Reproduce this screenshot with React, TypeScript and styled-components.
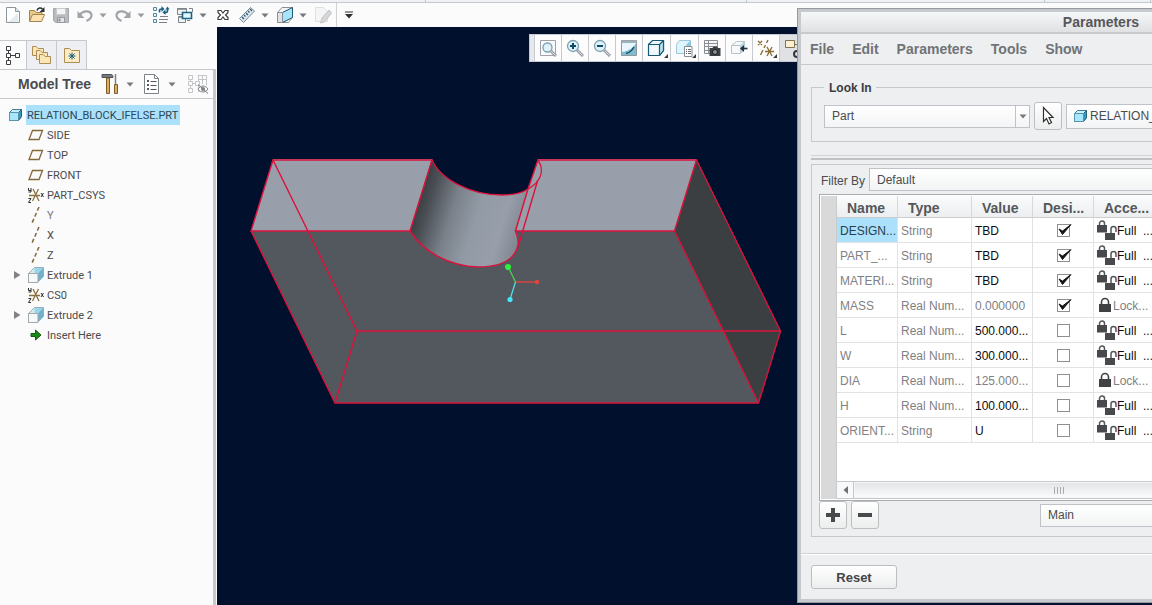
import React from "react";
import styled, { createGlobalStyle } from "styled-components";

const color = {
  panel: "#fbfbfc",
  line: "#c5c8cd",
  navy: "#00102d",
  dialog: "#edeff1",
  text: "#4a4b4d",
  muted: "#808184",
  select: "#abe1fb",
  edge: "#dc123c",
};

const GlobalStyle = createGlobalStyle`
  *, *::before, *::after { box-sizing: border-box; }
  html, body { margin: 0; height: 100%; overflow: hidden; }
  #root { height: 100%; }
  body, button, input, select {
    font-family: "Liberation Sans", Arial, sans-serif;
    font-size: 12px;
    color: ${color.text};
  }
  svg { display: block; flex: none; }
`;

/* ---------- frame ---------- */

const Page = styled.div`
  position: relative;
  display: flex;
  flex-direction: column;
  height: 100vh;
  overflow: hidden;
  background: ${color.panel};
`;

const RibbonEdge = styled.div`
  display: flex;
  height: 3px;
  background: #eef0f2;
  border-bottom: 1px solid ${color.line};
`;

const RibbonGroup = styled.div<{ $width: number }>`
  flex: none;
  width: ${(p) => p.$width}px;
  border-right: 1px solid ${color.line};
`;

const QuickBar = styled.div`
  display: flex;
  align-items: center;
  height: 24px;
  padding-left: 1px;
`;

const IconButton = styled.button<{ $faded?: boolean }>`
  display: flex;
  align-items: center;
  justify-content: center;
  width: 24px;
  height: 24px;
  padding: 0;
  border: 0;
  background: none;
  opacity: ${(p) => (p.$faded ? 0.5 : 1)};
`;

const CaretButton = styled(IconButton)<{ $wide?: boolean }>`
  width: ${(p) => (p.$wide ? 18 : 14)}px;
  padding-right: 2px;
`;

const BarDivider = styled.div`
  width: 1px;
  height: 24px;
  margin: 0 6px 0 1px;
  background: #d0d1d3;
`;

const Workspace = styled.div`
  display: flex;
  flex: 1;
  min-height: 0;
`;

/* ---------- model tree ---------- */

const Sidebar = styled.aside`
  display: flex;
  flex-direction: column;
  flex: none;
  width: 217px;
`;

const TabRow = styled.div`
  display: flex;
  flex: none;
  height: 42px;
  padding-top: 13px;
`;

const Tab = styled.button<{ $active?: boolean }>`
  display: flex;
  align-items: center;
  justify-content: center;
  width: ${(p) => (p.$active ? 27 : 30)}px;
  padding: 0;
  border: 1px solid ${color.line};
  border-left: 0;
  border-bottom: 0;
  background: ${(p) => (p.$active ? color.panel : "#eeeff2")};
`;

const TreePanel = styled.section`
  flex: 1;
  margin-right: 1px;
  border-top: 1px solid ${color.line};
  border-right: 3px solid #c6c8ce;
`;

const TreeHeader = styled.header`
  display: flex;
  align-items: center;
  height: 29px;
  padding-left: 18px;
  border-bottom: 1px solid ${color.line};
  & > :last-child { margin-left: 4px; }
`;

const TreeTitle = styled.h2`
  flex: none;
  width: 80px;
  margin: 0;
  font-size: 14px;
  line-height: 20px;
  white-space: nowrap;
`;

const TreeList = styled.ul`
  margin: 0;
  padding: 6px 0 0;
  list-style: none;
`;

const TreeRow = styled.li<{ $root?: boolean }>`
  display: flex;
  align-items: center;
  gap: 2px;
  height: 20px;
  padding-left: ${(p) => (p.$root ? 8 : 12)}px;
`;

const Expander = styled.span`
  display: flex;
  align-items: center;
  width: 14px;
  height: 20px;
`;

const TreeLabel = styled.span<{ $selected?: boolean; $light?: boolean }>`
  padding: 2px 2px 0 1px;
  font-family: Roboto, "Liberation Sans", sans-serif;
  font-size: 11px;
  line-height: 18px;
  color: ${(p) => (p.$selected ? "#2d4654" : p.$light ? "#77787a" : color.text)};
  background: ${(p) => (p.$selected ? color.select : "none")};
`;

/* ---------- viewport ---------- */

const Viewport = styled.main`
  position: relative;
  flex: 1;
  min-width: 0;
  overflow: hidden;
  background: ${color.navy};
`;

const ViewBar = styled.div`
  position: absolute;
  top: 7px;
  left: 312px;
  display: flex;
  height: 28px;
  padding-left: 4px;
  border: 1px solid #c6c9cf;
  border-right: 0;
  background: #e6e8ec;
`;

const ViewButton = styled.button<{ $menu?: boolean; $pressed?: boolean }>`
  position: relative;
  display: flex;
  align-items: center;
  justify-content: center;
  width: ${(p) => (p.$menu ? 28 : 27)}px;
  padding: 0 1px 0 0;
  border: 0;
  border-left: 1px solid #c6c9cf;
  background: ${(p) => (p.$pressed ? "#dfe1e5" : "#fcfcfd")};
`;

const MenuCorner = styled.span`
  position: absolute;
  right: 2px;
  bottom: 3px;
  border: 2px solid transparent;
  border-right-color: #3a3c40;
  border-bottom-color: #3a3c40;
`;

/* ---------- dialog ---------- */

const DialogFrame = styled.section`
  position: absolute;
  top: 8px;
  left: 797px;
  width: 608px;
  padding: 3px;
  border: 1px solid #96999d;
  background: #c6c9cd;
`;

const TitleBar = styled.h1`
  margin: 0;
  height: 22px;
  border-bottom: 2px solid #c8cbce;
  background: linear-gradient(#f6f7f8, #dfe1e3);
  font-size: 14px;
  line-height: 20px;
  text-align: center;
  color: #55575a;
`;

const MenuBar = styled.nav`
  display: flex;
  align-items: center;
  gap: 18px;
  height: 31px;
  padding-left: 9px;
  border-bottom: 1px solid ${color.line};
  background: ${color.dialog};
`;

const MenuItem = styled.button`
  padding: 0;
  border: 0;
  background: none;
  font-size: 14px;
  font-weight: bold;
  line-height: 20px;
  color: #717376;
`;

const DialogBody = styled.div`
  padding: 14px 10px 16px;
  background: ${color.dialog};
`;

const LookIn = styled.fieldset`
  margin: 0;
  padding: 7px 12px 11px;
  border: 1px solid ${color.line};
`;

const LookInTitle = styled.legend`
  padding: 2px 4px 0 5px;
  font-weight: bold;
  line-height: 14px;
  color: #3b3c3e;
`;

const LookInRow = styled.div`
  display: flex;
  align-items: center;
  gap: 4px;
`;

const SelectBox = styled.span<{ $width?: number }>`
  display: grid;
  grid-template-columns: 1fr 15px;
  flex: ${(p) => (p.$width ? "none" : "1")};
  width: ${(p) => (p.$width ? p.$width + "px" : "auto")};
  height: 23px;
`;

const SelectField = styled.select`
  grid-area: 1 / 1 / 2 / 3;
  appearance: none;
  height: 23px;
  padding: 0 0 0 7px;
  border: 1px solid #bfc2c6;
  border-radius: 0;
  background: linear-gradient(#ffffff, #f3f4f5);
`;

const SelectArrow = styled.span`
  grid-area: 1 / 2;
  display: flex;
  align-items: center;
  justify-content: center;
  border-left: 1px solid #bfc2c6;
  pointer-events: none;
`;

const ToolButton = styled.button`
  display: flex;
  align-items: center;
  justify-content: center;
  width: 28px;
  height: 28px;
  padding: 0;
  border: 1px solid #bcbfc2;
  border-radius: 3px;
  background: linear-gradient(#ffffff, #eceded);
`;

const PartField = styled.label`
  display: flex;
  flex: 1;
  align-items: center;
  height: 25px;
  padding-left: 6px;
  border: 1px solid #bfc2c6;
  background: linear-gradient(#ffffff, #f3f4f5);
`;

const PartInput = styled.input`
  flex: 1;
  min-width: 0;
  padding: 0 1px;
  border: 0;
  background: none;
`;

const SplitLine = styled.div`
  height: 5px;
  margin: 13px 0 4px;
  border-top: 1px solid #d2d4d7;
  border-bottom: 2px solid #bfc2c5;
`;

const GridGroup = styled.div`
  padding: 3px 7px 7px;
  border: 1px solid ${color.line};
`;

const FilterRow = styled.div`
  display: flex;
  align-items: center;
  padding-left: 2px;
`;

const FilterLabel = styled.label`
  width: 48px;
  padding-top: 2px;
  line-height: 20px;
`;

const GridBox = styled.div`
  display: flex;
  margin-top: 3px;
  padding: 1px;
  border: 1px solid #a9acaf;
  background: #fff;
`;

const Gutter = styled.div`
  flex: none;
  width: 16px;
  border-right: 1px solid #c9cbcd;
  background: #d9d9da;
`;

const GridBody = styled.div`
  flex: 1;
  min-width: 0;
  overflow: hidden;
`;

const Table = styled.table`
  width: 100%;
  table-layout: fixed;
  border-collapse: separate;
  border-spacing: 0;
`;

const Head = styled.th`
  height: 22px;
  padding: 3px 0 0 10px;
  border-right: 1px solid #d6d8da;
  border-bottom: 1px solid #cbcdd0;
  background: linear-gradient(#fafbfb, #eceef0);
  font-size: 14px;
  line-height: 18px;
  text-align: left;
  white-space: nowrap;
  overflow: hidden;
  color: #55575a;
`;

const Cell = styled.td<{ $strong?: boolean; $selected?: boolean }>`
  height: 25px;
  padding: 2px 0 0 3px;
  border-right: 1px solid #e0e2e4;
  border-bottom: 1px solid #e0e2e4;
  line-height: 20px;
  white-space: pre;
  overflow: hidden;
  color: ${(p) => (p.$selected ? "#26404e" : p.$strong ? "#0d0d0e" : color.muted)};
  background: ${(p) => (p.$selected ? color.select : "#fff")};
`;

const AccessValue = styled.div`
  display: flex;
  align-items: center;
  height: 22px;
`;

const CheckHolder = styled.label`
  display: grid;
  width: 54px;
  height: 22px;
  padding-bottom: 1px;
  place-items: center;
`;

const CheckInput = styled.input`
  grid-area: 1 / 1;
  appearance: none;
  width: 13px;
  height: 13px;
  margin: 0;
  border: 1px solid #8d8f92;
  background: #fff;
  & + svg { grid-area: 1 / 1; visibility: hidden; pointer-events: none; }
  &:checked + svg { visibility: visible; }
`;

const ScrollTrack = styled.div`
  display: flex;
  height: 18px;
  margin-top: 38px;
  border-top: 1px solid #c6c9cc;
  border-bottom: 1px solid #c6c9cc;
  background: #f4f5f6;
`;

const ScrollArrow = styled.button`
  display: flex;
  align-items: center;
  justify-content: center;
  width: 17px;
  padding: 0;
  border: 0;
  border-right: 1px solid #c6c9cc;
  background: #f8f9fa;
`;

const ScrollThumb = styled.div`
  flex: none;
  display: flex;
  align-items: center;
  justify-content: center;
  width: 408px;
  gap: 2px;
  margin: 1px;
  background: linear-gradient(#e2e4e6, #fbfbfc);
`;

const Grip = styled.span`
  width: 1px;
  height: 7px;
  background: #a8abae;
`;

const GridFooter = styled.div`
  display: flex;
  align-items: center;
  gap: 4px;
  & > :last-child { margin-left: auto; }
`;

const DialogFooter = styled.footer`
  padding: 11px 10px 10px;
  border-top: 1px solid #cfd1d4;
  box-shadow: inset 0 1px #fff;
  background: ${color.dialog};
`;

const ResetButton = styled.button`
  width: 86px;
  height: 24px;
  padding: 0;
  border: 1px solid #bcbfc2;
  border-radius: 3px;
  background: linear-gradient(#ffffff, #eceded);
  font-size: 13px;
  font-weight: bold;
  color: #434547;
`;

/* ---------- icons ---------- */

type IconProps = { w?: number; h?: number; children: React.ReactNode };
const Icon = ({ w = 18, h = 18, children }: IconProps) => (
  <svg width={w} height={h} viewBox={`0 0 ${w} ${h}`} fill="none" aria-hidden="true">
    {children}
  </svg>
);

const Caret = ({ tone = "#77797d" }: { tone?: string }) => (
  <Icon w={8} h={5}>
    <path d="M.5 .5h7L4 4.5z" fill={tone} />
  </Icon>
);

const NewIcon = () => (
  <Icon>
    <path d="M2.5 1.5h9l4 4v11h-13z" fill="#fff" stroke="#8c949c" />
    <path d="M11.500 1.500v4h4" fill="#dfe6ec" stroke="#8c949c" />
    <path d="M14 16h-10l10-9z" fill="#e6ebf0" />
  </Icon>
);

const OpenIcon = () => (
  <Icon>
    <path d="M1.500 15V4.500h5l1.500 2h6V9" fill="#e9c98a" stroke="#a3824b" />
    <path d="M1.500 15.500 4.500 8.500h12l-3 7z" fill="#fbe2af" stroke="#a3824b" />
    <path d="M9 4.500C10 1.500 13 1.500 14.500 3" stroke="#2d3236" strokeWidth="1.600" />
    <path d="M16.500 1v5h-5z" fill="#2d3236" />
  </Icon>
);

const SaveIcon = () => (
  <Icon>
    <path d="M1.500 2.500h15v14h-13l-2-2z" fill="#b9bbbe" stroke="#a6a9ac" />
    <path d="M4.500 2.500h9v6h-9z" fill="#f3f4f5" stroke="#c8cacc" />
    <path d="M5.500 11.500h7v5h-7z" fill="#e3e5e7" stroke="#97999c" />
    <path d="M6.500 12.500h2v3h-2z" fill="#8c8e92" />
  </Icon>
);

const UndoIcon = ({ flip = false }: { flip?: boolean }) => (
  <Icon>
    <g transform={flip ? "matrix(-1 0 0 1 18 0)" : undefined}>
      <path d="M4 9C6 4.500 15.500 3.500 15.500 9.500c0 2.500-2 4-5 5.500" stroke="#a0a3a7" strokeWidth="2.200" />
      <path d="M1.500 5v7h7z" fill="#a0a3a7" />
    </g>
  </Icon>
);

const RegenIcon = () => (
  <Icon>
    <path d="M1.500 1.500h3v3h-3zM1.500 7.500h3v3h-3zM1.500 13.500h3v3h-3z" fill="#e8f4fa" stroke="#5a86a0" />
    <path d="M8 10.500h8M7 13.500h9M7 16.500h8" stroke="#7d8186" />
    <path d="M7.500 6.500V4.500c0-1 1-1.500 2.500-1.500M15.500 3v2c0 1-1 1.500-2.500 1.500" stroke="#1b607f" strokeWidth="1.600" />
    <path d="M9.500 0v6l3-3zM13.500 9V3.500l-3 3z" fill="#1b607f" />
    <path d="M13.500 3.500 15.500.500l2 3z" fill="#1b607f" />
  </Icon>
);

const WindowsIcon = () => (
  <Icon>
    <path d="M1.500 2.500h9v6h-9zM2.500 10.500h7v6h-7z" fill="#f0f2f4" stroke="#7d8388" />
    <path d="M1.500 3h9M3 11h6" stroke="#7d8388" strokeWidth="1.500" />
    <path d="M13 2.500h3.500V6M14 14.500h-3" stroke="#7d8388" />
    <path d="M6.500 6.500h9v6h-9z" fill="#e4f6fd" stroke="#1d6384" strokeWidth="1.600" />
  </Icon>
);

const CloseIcon = () => (
  <Icon w={14} h={14}>
    <path d="M2 2.500h3L7 5l2-2.500h3v2L9.500 7l2.500 2.500v2H9L7 9l-2 2.500H2v-2L4.500 7 2 4.500z" fill="#fff" stroke="#3b3d40" strokeWidth="1.200" />
  </Icon>
);

const RulerIcon = () => (
  <Icon>
    <path d="M1.500 12.500 12.500 1.500l4 3.500L5.500 16.500z" fill="#d9e9f1" stroke="#7e8b94" />
    <path d="m4 11 2 2m0-4 1.500 1.500M8 7l2 2m0-4 1.500 1.500M12 3l2 2" stroke="#33536a" strokeWidth="1.200" />
  </Icon>
);

const SectionIcon = () => (
  <Icon>
    <path d="M1.500 6.500 6 1.500h10.500v10l-4 5h-11z" fill="#f3f5f6" stroke="#8b9094" />
    <path d="M6.500 6.500 16.500 1.500v10l-10 5z" fill="#a5e4fa" stroke="#26566e" />
    <path d="M1.500 6.500h5v10h-5z" fill="#dfe2e4" stroke="#8b9094" />
  </Icon>
);

const PasteIcon = () => (
  <Icon>
    <path d="M1.500 1.500h8l4 4v10h-12z" fill="#eff0f1" stroke="#c2c4c6" />
    <path d="m8 12 7-8 2.500 3-7 9-4 1z" fill="#b0b2b5" stroke="#8d8f92" />
  </Icon>
);

const MoreIcon = () => (
  <Icon w={10} h={8}>
    <path d="M1 1h8" stroke="#2e2f31" />
    <path d="M1 3h8L5 7.500z" fill="#2e2f31" />
  </Icon>
);

const HierarchyIcon = () => (
  <Icon w={16} h={20}>
    <path d="M3.500 5v11M6 10.500h5" stroke="#3c3e41" />
    <path d="M1.500 1.500h4v4h-4zM1.500 8.500h4v4h-4zM1.500 15.500h4v4h-4zM10.500 8.500h4v4h-4z" fill="#fff" stroke="#3c3e41" />
  </Icon>
);

const folder = (x: number, y: number, w: number, h: number) =>
  `M${x} ${y}h${w / 3}l2 2h${w - w / 3 - 2}v${h}h${-w}z`;

const FoldersIcon = () => (
  <Icon w={20} h={20}>
    <g fill="#fbe6b6" stroke="#ad8d55">
      <path d={folder(0.5, 1.5, 11, 7)} />
      <path d={folder(4.5, 5.5, 11, 7)} />
      <path d={folder(7.5, 9.5, 11, 7)} />
    </g>
  </Icon>
);

const FavoriteIcon = () => (
  <Icon w={18} h={18}>
    <path d={folder(1.5, 2.5, 15, 12)} fill="#fcebc3" stroke="#ad8d55" />
    <path d="M9 6.500v7M5.500 10h7M6.500 7.500l5 5M11.500 7.500l-5 5" stroke="#175d7c" />
  </Icon>
);

const HammerIcon = () => (
  <Icon w={18} h={22}>
    <path d="M5.500 5h3v15.500h-3z" fill="#dcae62" stroke="#7e5c27" />
    <path d="M1 1.500h9.500c1 0 1.500 1.500 1.500 3H1z" fill="#777b80" stroke="#4d5155" />
    <path d="M14.500 1v10" stroke="#7f8388" strokeWidth="1.500" />
    <path d="M13.500 11.500h3v9h-3z" fill="#dcae62" stroke="#7e5c27" />
  </Icon>
);

const ListPageIcon = () => (
  <Icon w={18} h={20}>
    <path d="M1.500 .5h10l4 4v15h-14z" fill="#fff" stroke="#7d8287" />
    <path d="M11.500 .5v4h4" stroke="#7d8287" />
    <path d="M7.500 7.500h6M7.500 11.500h6M7.500 15.500h6" stroke="#55595d" />
    <path d="M4 7h2M4 11h2M4 15h2" stroke="#55595d" strokeWidth="2" />
  </Icon>
);

const HideTreeIcon = () => (
  <Icon w={22} h={20}>
    <g stroke="#c3c5c8">
      <path d="M3.500 4v12M5 9.500h5M11.500 1v17M11.500 1.500h8v10M15.500 1v9M11.500 5.500h8M11.500 17.500h2" />
      <path d="M1.500 1.500h4v4h-4zM1.500 7.500h4v4h-4zM1.500 14.500h4v4h-4zM8.500 7.500h4v4h-4z" fill="#fbfbfc" />
    </g>
    <path d="M11 15c3-4 7-4 10 0-3 4-7 4-10 0z" fill="#fff" stroke="#7f8185" />
    <circle cx="16" cy="15" r="2" fill="#7f8185" />
    <path d="m11 10.500 10 9" stroke="#7f8185" />
  </Icon>
);

const PartIcon = () => (
  <Icon w={16} h={16}>
    <path d="M1.500 5.500 4.500 2.500h9v7l-3 4h-9z" fill="#c8effc" stroke="#3f7c95" />
    <path d="M10.500 5.500 13.500 2.500v7l-3 4z" fill="#2f9bc2" stroke="#28627b" />
    <path d="M1.500 5.500h9v8h-9z" fill="#a8e6fb" stroke="#5794ab" />
  </Icon>
);

const PlaneIcon = () => (
  <Icon w={16} h={16}>
    <path d="M4.500 3.500h10l-3.500 9H1z" stroke="#83683a" strokeWidth="1.300" />
  </Icon>
);

const CsysIcon = () => (
  <Icon w={16} h={16}>
    <path d="M1 8.500h11M5 2l6 12M10.500 2 4.500 14" stroke="#8d6f3d" strokeWidth="1.300" />
    <path d="M.5 1v2.500h2.500M3 1v4H.5M.5 11.500H3l-2.500 4H3M13 6l2.500 4M15.500 6 13 10" stroke="#2e2f31" />
  </Icon>
);

const AxisIcon = () => (
  <Icon w={16} h={16}>
    <path d="M11 0 4 16" stroke="#83683a" strokeWidth="1.500" strokeDasharray="4 2.500" />
  </Icon>
);

const ExtrudeIcon = () => (
  <Icon w={16} h={16}>
    <path d="M.5 6.500 6.500.500h9v9l-6 6h-9z" fill="#d5ecf5" stroke="#93b0bd" />
    <path d="M6.500 1h8.500l-5 5.500H6.500z" fill="#9cd3e8" />
    <path d="M10 6.500 15 1v8.500l-5 5z" fill="#6fb0cc" />
    <path d="M.5 6.500h9.500v9H.500z" fill="#f7f8f9" stroke="#a3a7aa" />
  </Icon>
);

const InsertIcon = () => (
  <Icon w={16} h={16}>
    <path d="M3 6.500h4.500V3l5.500 5-5.500 5V9.500H3z" fill="#188a18" stroke="#145a12" />
  </Icon>
);

const TriangleRight = () => (
  <Icon w={9} h={10}>
    <path d="M2 1v8l6.500-4z" fill="#808285" />
  </Icon>
);

const MagnifierIcon = ({ mark }: { mark?: "plus" | "minus" }) => (
  <Icon>
    {!mark && <path d="M1.500 1.500h15v15h-15z" fill="#f8f9fa" stroke="#a0a4a8" />}
    <path d="m11 11 6 6" stroke="#9a9ea3" strokeWidth="3" />
    <path d="m11.500 11.500 5 5" stroke="#dcdfe2" />
    <circle cx={mark ? 7 : 8.5} cy={mark ? 7 : 8.5} r={mark ? 5.5 : 4.5} fill="#dff2fa" stroke="#7ba0af" strokeWidth="1.300" />
    {mark && <path d={mark === "plus" ? "M4 7h6M7 4v6" : "M4 7h6"} stroke="#0f4a66" strokeWidth="2" />}
  </Icon>
);

const RepaintIcon = () => (
  <Icon>
    <path d="M1.500 1.500h15v15h-15z" fill="#7fbdd3" stroke="#8f989d" />
    <path d="M2 4h14c-2 4-7 8-14 9z" fill="#e9f7fc" />
    <path d="M1.500 2.500h15" stroke="#a9aeb2" strokeWidth="2" />
    <path d="M6 14.500c3-.5 6-3 8-6.500" stroke="#174a60" strokeWidth="1.500" />
  </Icon>
);

const CubeIcon = () => (
  <Icon>
    <path d="M1.500 5.500 5.500 1.500h11v10l-4 5h-11z" fill="#f0fafd" stroke="#155a78" strokeWidth="1.200" />
    <path d="M12.500 5.500 16.500 1.500v10l-4 5z" fill="#b6e3f3" />
    <path d="M1.500 5.500h11v11M12.500 5.500l4-4M16.500 1.500v10l-4 5" stroke="#155a78" strokeWidth="1.200" />
  </Icon>
);

const SavedViewIcon = () => (
  <Icon>
    <path d="M1.500 5.500 4.500 1.500h11v9l-3 4h-11z" fill="#dff5fd" stroke="#9bc8da" />
    <path d="M11.500 5.500 15.500 1.500v9h-4z" fill="#8cc9e0" />
    <path d="M9.500 7.500h7.500v10H9.500z" fill="#fff" stroke="#888c90" />
    <path d="M11 10.500h1m1 0h3m-5 2h1m1 0h3m-5 2h1m1 0h3" stroke="#66696d" />
  </Icon>
);

const CameraIcon = () => (
  <Icon>
    <path d="M1.500 1.500h13v13h-13zM1.500 4.500h13M1.500 7.500h13M1.500 11.500h13M5.500 1v13" fill="#f5f6f7" stroke="#8b8f93" />
    <path d="M6.500 9h3l1-1.500h3.500l1 1.500h2.500v8h-11z" fill="#3d4043" />
    <circle cx="12" cy="13" r="2.500" fill="#8a8d91" stroke="#1c1d1f" />
  </Icon>
);

const OrientIcon = () => (
  <Icon>
    <path d="M1.500 6.500 6.500 2.500h8v8l-4 4h-9z" fill="#f5f9fb" stroke="#b9c2c7" />
    <path d="M1.500 6.500h9v8M10.500 6.500l4-4" stroke="#b9c2c7" />
    <path d="M11 7 14.500 3v7.500L11 14z" fill="#a9d8e9" />
    <path d="M12 9.500h5.500" stroke="#24343d" strokeWidth="1.600" />
    <path d="m14 6-4 3.500 4 3.500z" fill="#24343d" />
  </Icon>
);

const DatumIcon = () => (
  <Icon>
    <g stroke="#8a7036" strokeWidth="1.400">
      <path d="m1 2 4 4M5 2 1 6M11 1l-1.500 3M8.500 6 7 9M6 11l-2.500 5M8 12.500h9M10 8l5 9M15 8l-5 9" />
    </g>
  </Icon>
);

const AnnotationIcon = () => (
  <Icon w={24} h={22}>
    <path d="M4.500 3.500h9v7h-9z" fill="#fdefcf" stroke="#7c7350" />
    <path d="M14 7.500h10" stroke="#7c7350" />
    <circle cx="16" cy="17" r="3" stroke="#34373a" strokeWidth="2" />
  </Icon>
);

const CursorIcon = () => (
  <Icon w={14} h={20}>
    <path d="M2.500 1.500v14l3-3 2.500 5.500 2.500-1.500-2.500-5h4z" fill="#fff" stroke="#2e3032" strokeWidth="1.200" />
  </Icon>
);

const CheckMark = () => (
  <Icon w={17} h={17}>
    <path d="m4 7 3.500 5.500L16 2.500 7.500 9z" fill="#151516" stroke="#151516" />
  </Icon>
);

const LockedIcon = () => (
  <Icon w={16} h={18}>
    <path d="M4.500 8V5a3.500 3.500 0 0 1 7 0V8" stroke="#3f4143" strokeWidth="1.600" />
    <path d="M2 7h12v8H2z" fill="#3f4143" />
  </Icon>
);

const FullAccessIcon = () => (
  <Icon w={20} h={22}>
    <path d="M2.500 6V3.500a2.500 2.500 0 0 1 5 0V6M14 14V9a2.500 2.500 0 0 1 5 0v3" stroke="#55575a" strokeWidth="1.500" />
    <path d="M0 5h10v7.500H0zM8 13h10v7H8z" fill="#48494c" />
  </Icon>
);

const SignIcon = ({ plus = false }: { plus?: boolean }) => (
  <Icon w={16} h={16}>
    <path d={plus ? "M1 8h14M8 1v14" : "M1 8h14"} stroke="#47494b" strokeWidth="4" />
  </Icon>
);

/* ---------- 3D model ---------- */

const ModelScene = () => (
  <svg width="935" height="578" viewBox="217 27 935 578" fill="none" role="img" aria-label="Block model">
    <defs>
      <linearGradient id="bore" gradientUnits="userSpaceOnUse" x1="421" y1="195" x2="524" y2="227">
        <stop offset="0" stopColor="#3c4044" />
        <stop offset="0.1" stopColor="#4b5056" />
        <stop offset="0.32" stopColor="#7a818a" />
        <stop offset="0.55" stopColor="#929aa5" />
        <stop offset="0.8" stopColor="#989fab" />
        <stop offset="1" stopColor="#7f868f" />
      </linearGradient>
    </defs>
    <path d="M251 231H674.500L758.500 403H335z" fill="#53585e" />
    <path d="M696.500 159 780.500 331 758.500 403 674.500 231z" fill="#3c3f42" />
    <path d="M273 159H432L410 231H251z" fill="#989fab" />
    <path d="M538 159H696.500L674.500 231H515L528 189z" fill="#989fab" />
    <path
      d="M432 159C440 179 470 195 502 195C513 195 522 193 528 189L515 231C519 236 518 241 518 245C515 260 500 267 478 267C450 266 424 253 410 231z"
      fill="url(#bore)"
    />
    <g stroke={color.edge} strokeWidth="1.400">
      <path d="M410 231H251L273 160H432L410 231C424 253 450 266 478 267C500 267 515 260 518 245C519 240 517 236 515.500 231H674.500L696.500 160H538L528 189" />
      <path d="M432 160C440 179 470 195 502 195C513 195 522 193 528 189C533 186 536 184 537.500 181C543 174 542 166 538 160" />
      <path d="M528 189 515.500 231M537.500 181 518 247" />
      <path d="M251 231 335 403H758.500L780.500 331L696.500 160M674.500 231 758.500 403" />
      <path d="M273 160 357 331H780.500M357 331 335 403" />
    </g>
    <path d="M515.500 282 508.500 267.500" stroke="#4fd84e" strokeWidth="1.200" />
    <path d="M515.500 282H537" stroke="#e2433c" strokeWidth="1.400" />
    <path d="M515.500 282 510 299.500" stroke="#4fe3ee" strokeWidth="1.200" />
    <circle cx="508" cy="267" r="3" fill="#2ff03c" />
    <circle cx="537" cy="282" r="2.200" fill="#e2433c" />
    <circle cx="510" cy="299.500" r="2.600" fill="#45e6f5" />
  </svg>
);

/* ---------- data ---------- */

type TreeItem = { label: string; icon: React.ReactNode; expandable?: boolean; light?: boolean };

const treeItems: TreeItem[] = [
  { label: "SIDE", icon: <PlaneIcon /> },
  { label: "TOP", icon: <PlaneIcon /> },
  { label: "FRONT", icon: <PlaneIcon /> },
  { label: "PART_CSYS", icon: <CsysIcon /> },
  { label: "Y", icon: <AxisIcon />, light: true },
  { label: "X", icon: <AxisIcon /> },
  { label: "Z", icon: <AxisIcon /> },
  { label: "Extrude 1", icon: <ExtrudeIcon />, expandable: true },
  { label: "CS0", icon: <CsysIcon /> },
  { label: "Extrude 2", icon: <ExtrudeIcon />, expandable: true },
  { label: "Insert Here", icon: <InsertIcon /> },
];

type Param = { name: string; type: string; value: string; designate: boolean; locked?: boolean };

const params: Param[] = [
  { name: "DESIGN...", type: "String", value: "TBD", designate: true },
  { name: "PART_...", type: "String", value: "TBD", designate: true },
  { name: "MATERI...", type: "String", value: "TBD", designate: true },
  { name: "MASS", type: "Real Num...", value: "0.000000", designate: true, locked: true },
  { name: "L", type: "Real Num...", value: "500.000...", designate: false },
  { name: "W", type: "Real Num...", value: "300.000...", designate: false },
  { name: "DIA", type: "Real Num...", value: "125.000...", designate: false, locked: true },
  { name: "H", type: "Real Num...", value: "100.000...", designate: false },
  { name: "ORIENT...", type: "String", value: "U", designate: false },
];

/* ---------- sections ---------- */

const QuickAccess = () => (
  <QuickBar>
    <IconButton aria-label="New"><NewIcon /></IconButton>
    <IconButton aria-label="Open"><OpenIcon /></IconButton>
    <IconButton aria-label="Save"><SaveIcon /></IconButton>
    <IconButton aria-label="Undo"><UndoIcon /></IconButton>
    <CaretButton aria-label="Undo list"><Caret tone="#9a9ca0" /></CaretButton>
    <IconButton aria-label="Redo"><UndoIcon flip /></IconButton>
    <CaretButton aria-label="Redo list"><Caret tone="#9a9ca0" /></CaretButton>
    <IconButton aria-label="Regenerate"><RegenIcon /></IconButton>
    <IconButton aria-label="Windows"><WindowsIcon /></IconButton>
    <CaretButton aria-label="Window list"><Caret /></CaretButton>
    <IconButton aria-label="Close"><CloseIcon /></IconButton>
    <IconButton aria-label="Measure"><RulerIcon /></IconButton>
    <CaretButton aria-label="Measure list"><Caret /></CaretButton>
    <IconButton aria-label="Section"><SectionIcon /></IconButton>
    <CaretButton aria-label="Section list"><Caret /></CaretButton>
    <IconButton aria-label="Edit definition" $faded><PasteIcon /></IconButton>
    <BarDivider />
    <CaretButton aria-label="Customize"><MoreIcon /></CaretButton>
  </QuickBar>
);

const ModelTree = () => (
  <Sidebar>
    <TabRow>
      <Tab $active aria-label="Model tree"><HierarchyIcon /></Tab>
      <Tab aria-label="Folder browser"><FoldersIcon /></Tab>
      <Tab aria-label="Favorites"><FavoriteIcon /></Tab>
    </TabRow>
    <TreePanel>
      <TreeHeader>
        <TreeTitle>Model Tree</TreeTitle>
        <IconButton aria-label="Settings"><HammerIcon /></IconButton>
        <CaretButton aria-label="Settings list" $wide><Caret /></CaretButton>
        <IconButton aria-label="Show"><ListPageIcon /></IconButton>
        <CaretButton aria-label="Show list" $wide><Caret /></CaretButton>
        <IconButton aria-label="Hide tree"><HideTreeIcon /></IconButton>
      </TreeHeader>
      <TreeList>
        <TreeRow $root>
          <PartIcon />
          <TreeLabel $selected>RELATION_BLOCK_IFELSE.PRT</TreeLabel>
        </TreeRow>
        {treeItems.map((item) => (
          <TreeRow key={item.label}>
            <Expander>{item.expandable && <TriangleRight />}</Expander>
            {item.icon}
            <TreeLabel $light={item.light}>{item.label}</TreeLabel>
          </TreeRow>
        ))}
      </TreeList>
    </TreePanel>
  </Sidebar>
);

const GraphicsArea = () => (
  <Viewport>
    <ModelScene />
    <ViewBar>
      <ViewButton aria-label="Refit"><MagnifierIcon /></ViewButton>
      <ViewButton aria-label="Zoom in"><MagnifierIcon mark="plus" /></ViewButton>
      <ViewButton aria-label="Zoom out"><MagnifierIcon mark="minus" /></ViewButton>
      <ViewButton aria-label="Repaint"><RepaintIcon /></ViewButton>
      <ViewButton aria-label="Display style" $menu><CubeIcon /><MenuCorner /></ViewButton>
      <ViewButton aria-label="Saved orientations" $menu><SavedViewIcon /><MenuCorner /></ViewButton>
      <ViewButton aria-label="View manager"><CameraIcon /></ViewButton>
      <ViewButton aria-label="Reorient"><OrientIcon /></ViewButton>
      <ViewButton aria-label="Datum display"><DatumIcon /><MenuCorner /></ViewButton>
      <ViewButton aria-label="Annotations" $pressed><AnnotationIcon /></ViewButton>
    </ViewBar>
  </Viewport>
);

const ParamRow = ({ param, selected }: { param: Param; selected: boolean }) => (
  <tr>
    <Cell $selected={selected}>{param.name}</Cell>
    <Cell>{param.type}</Cell>
    <Cell $strong={!param.locked}>{param.value}</Cell>
    <Cell>
      <CheckHolder>
        <CheckInput type="checkbox" defaultChecked={param.designate} aria-label={`Designate ${param.name}`} />
        <CheckMark />
      </CheckHolder>
    </Cell>
    <Cell $strong={!param.locked}>
      <AccessValue>
        {param.locked ? <LockedIcon /> : <FullAccessIcon />}
        {param.locked ? "Lock..." : "Full  ..."}
      </AccessValue>
    </Cell>
    <Cell />
  </tr>
);

const ParametersDialog = () => (
  <DialogFrame role="dialog" aria-labelledby="dialog-title">
    <TitleBar id="dialog-title">Parameters</TitleBar>
    <MenuBar>
      {["File", "Edit", "Parameters", "Tools", "Show"].map((name) => (
        <MenuItem key={name}>{name}</MenuItem>
      ))}
    </MenuBar>
    <DialogBody>
      <LookIn>
        <LookInTitle>Look In</LookInTitle>
        <LookInRow>
          <SelectBox $width={206}>
            <SelectField aria-label="Look in"><option>Part</option></SelectField>
            <SelectArrow><Caret /></SelectArrow>
          </SelectBox>
          <ToolButton aria-label="Select object"><CursorIcon /></ToolButton>
          <PartField>
            <PartIcon />
            <PartInput aria-label="Selected part" readOnly value="RELATION_BLOCK_IFELSE" />
          </PartField>
        </LookInRow>
      </LookIn>
      <SplitLine />
      <GridGroup>
        <FilterRow>
          <FilterLabel htmlFor="filter">Filter By</FilterLabel>
          <SelectBox>
            <SelectField id="filter"><option>Default</option></SelectField>
            <SelectArrow><Caret /></SelectArrow>
          </SelectBox>
        </FilterRow>
        <GridBox>
          <Gutter />
          <GridBody>
            <Table>
              <colgroup>
                <col width="61" />
                <col width="74" />
                <col width="61" />
                <col width="61" />
                <col width="61" />
                <col />
              </colgroup>
              <thead>
                <tr>
                  <Head>Name</Head>
                  <Head>Type</Head>
                  <Head>Value</Head>
                  <Head>Desi...</Head>
                  <Head>Acce...</Head>
                  <Head />
                </tr>
              </thead>
              <tbody>
                {params.map((param, index) => (
                  <ParamRow key={param.name} param={param} selected={index === 0} />
                ))}
              </tbody>
            </Table>
            <ScrollTrack>
              <ScrollArrow aria-label="Scroll left">
                <Icon w={5} h={8}><path d="M5 0v8L.5 4z" fill="#6e7073" /></Icon>
              </ScrollArrow>
              <ScrollThumb><Grip /><Grip /><Grip /><Grip /></ScrollThumb>
            </ScrollTrack>
          </GridBody>
        </GridBox>
        <GridFooter>
          <ToolButton aria-label="Add parameter"><SignIcon plus /></ToolButton>
          <ToolButton aria-label="Remove parameter"><SignIcon /></ToolButton>
          <SelectBox $width={343}>
            <SelectField aria-label="Parameter set"><option>Main</option></SelectField>
            <SelectArrow><Caret /></SelectArrow>
          </SelectBox>
        </GridFooter>
      </GridGroup>
    </DialogBody>
    <DialogFooter>
      <ResetButton>Reset</ResetButton>
    </DialogFooter>
  </DialogFrame>
);

export default function App() {
  return (
    <>
      <GlobalStyle />
      <Page>
        <RibbonEdge>
          <RibbonGroup $width={426} />
          <RibbonGroup $width={321} />
          <RibbonGroup $width={298} />
          <RibbonGroup $width={106} />
        </RibbonEdge>
        <QuickAccess />
        <Workspace>
          <ModelTree />
          <GraphicsArea />
        </Workspace>
        <ParametersDialog />
      </Page>
    </>
  );
}
